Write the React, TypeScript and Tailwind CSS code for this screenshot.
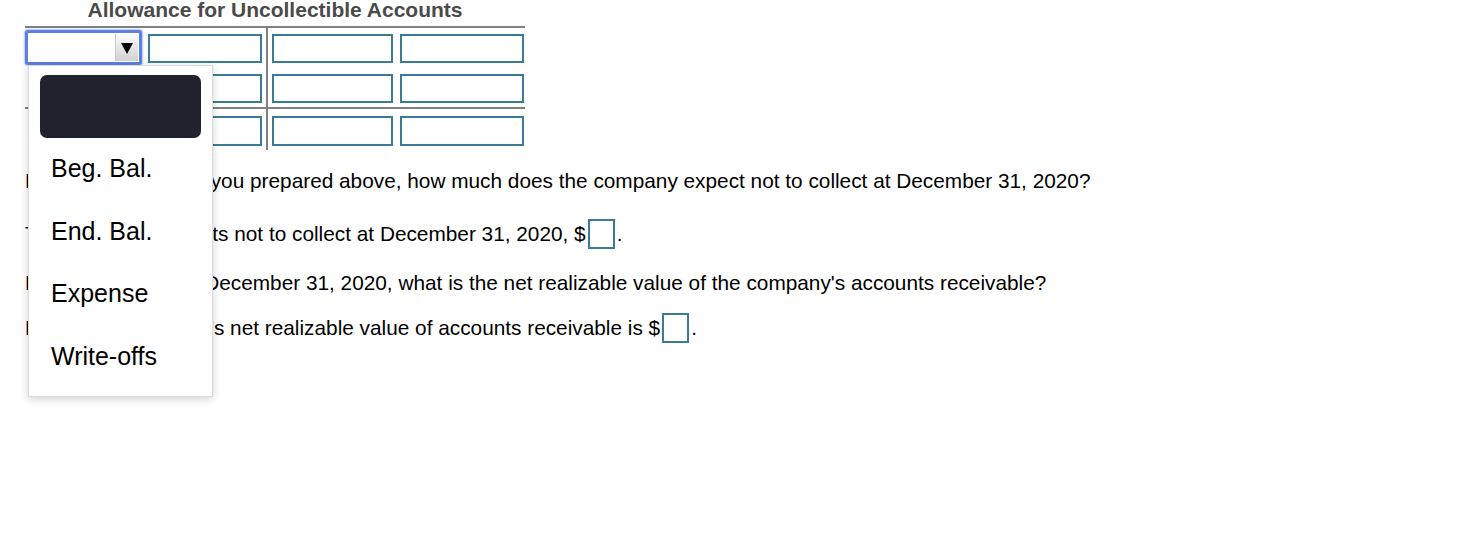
import React from "react";

const font = "font-['Liberation_Sans',Arial,Helvetica,sans-serif]";

function Caret() {
  return (
    <svg width="12" height="12" viewBox="0 0 12 12" className="block">
      <polygon points="0,1 12,1 6,12" fill="#000" />
    </svg>
  );
}

// the open select in row 1 carries the blue focus ring
function FocusedSelect() {
  return (
    <div className="mt-[2px] flex h-[35px] w-[117px] shrink-0 rounded-[3px] border-[3px] border-[#5b7fe3] bg-white p-px shadow-[0_0_2px_1px_rgba(91,127,227,0.45)]">
      <div className="flex-1" />
      <div className="flex w-[23px] items-center justify-center border-l border-[#c9c9c9] bg-gradient-to-b from-[#fbfbfb] to-[#d2d2d2]">
        <Caret />
      </div>
    </div>
  );
}

function PlainSelect() {
  return (
    <div className="ml-[5px] mt-[5px] flex h-[30px] w-[108px] shrink-0 border border-[#8a8a8a] bg-white">
      <div className="flex-1" />
      <div className="flex w-[22px] items-center justify-center bg-gradient-to-b from-[#fbfbfb] to-[#d4d4d4]">
        <Caret />
      </div>
    </div>
  );
}

function Cell({ w, ml, mt, h }: { w: string; ml: string; mt: string; h: string }) {
  return <div className={`${w} ${h} ${ml} ${mt} shrink-0 border-2 border-[#3b7b9a] bg-white`} />;
}

function Row({ first, h, mt, cellH }: { first?: boolean; h: string; mt: string; cellH: string }) {
  return (
    <div className={`flex ${h}`}>
      <div className="w-[123px] shrink-0">{first ? <FocusedSelect /> : <PlainSelect />}</div>
      <Cell w="w-[114px]" ml="ml-0" mt={mt} h={cellH} />
      <div className="ml-[4px] w-[2px] shrink-0 self-stretch bg-[#808080]" />
      <Cell w="w-[121px]" ml="ml-[4px]" mt={mt} h={cellH} />
      <Cell w="w-[124px]" ml="ml-[7px]" mt={mt} h={cellH} />
    </div>
  );
}

function AnswerBox() {
  return <span className="mx-[2px] inline-block h-[30px] w-[27px] border-2 border-[#3b7b9a] bg-white align-middle" />;
}

const options = ["", "Beg. Bal.", "End. Bal.", "Expense", "Write-offs"];

export default function App() {
  return (
    <div className={`relative h-[554px] w-[1470px] bg-white ${font}`}>
      <div className="ml-[25px] w-[500px]">
        <div className="h-[20px] text-center text-[21px] font-bold leading-[19px] text-[#4a4a4a]">
          Allowance for Uncollectible Accounts
        </div>
        <div className="mt-[6px] border-t-2 border-[#808080]">
          <Row first h="h-[41px]" mt="mt-[6px]" cellH="h-[29px]" />
          <div className="border-b-2 border-[#808080]">
            <Row h="h-[38px]" mt="mt-[5px]" cellH="h-[29px]" />
          </div>
          <Row h="h-[41px]" mt="mt-[7px]" cellH="h-[30px]" />
        </div>
      </div>

      <div className="ml-[25px] text-[20.8px] text-black">
        <div className="mt-[18px] flex h-[25px] items-center whitespace-nowrap">
          From the T-account you prepared above, how much does the company expect not to collect at December 31, 2020?
        </div>
        <div className="mt-[26px] flex h-[30px] items-center whitespace-nowrap">
          The company expects not to collect at December 31, 2020, $<AnswerBox />.
        </div>
        <div className="mt-[22px] flex h-[24px] items-center whitespace-nowrap">
          Based on these, at December 31, 2020, what is the net realizable value of the company's accounts receivable?
        </div>
        <div className="mt-[18px] flex h-[30px] items-center whitespace-nowrap">
          Hence the company's net realizable value of accounts receivable is $<AnswerBox />.
        </div>
      </div>

      <div className="absolute left-[28px] top-[65px] z-10 h-[332px] w-[185px] border border-[#dcdcdc] bg-white py-[9px] shadow-[0_2px_8px_rgba(0,0,0,0.18)]">
        {options.map((o, i) => (
          <div
            key={i}
            className={
              "mx-[11px] flex h-[62.5px] items-center px-[11px] text-[25px] text-black " +
              (i === 0 ? "rounded-[7px] bg-[#1f232e]" : "")
            }
          >
            {o}
          </div>
        ))}
      </div>
    </div>
  );
}
